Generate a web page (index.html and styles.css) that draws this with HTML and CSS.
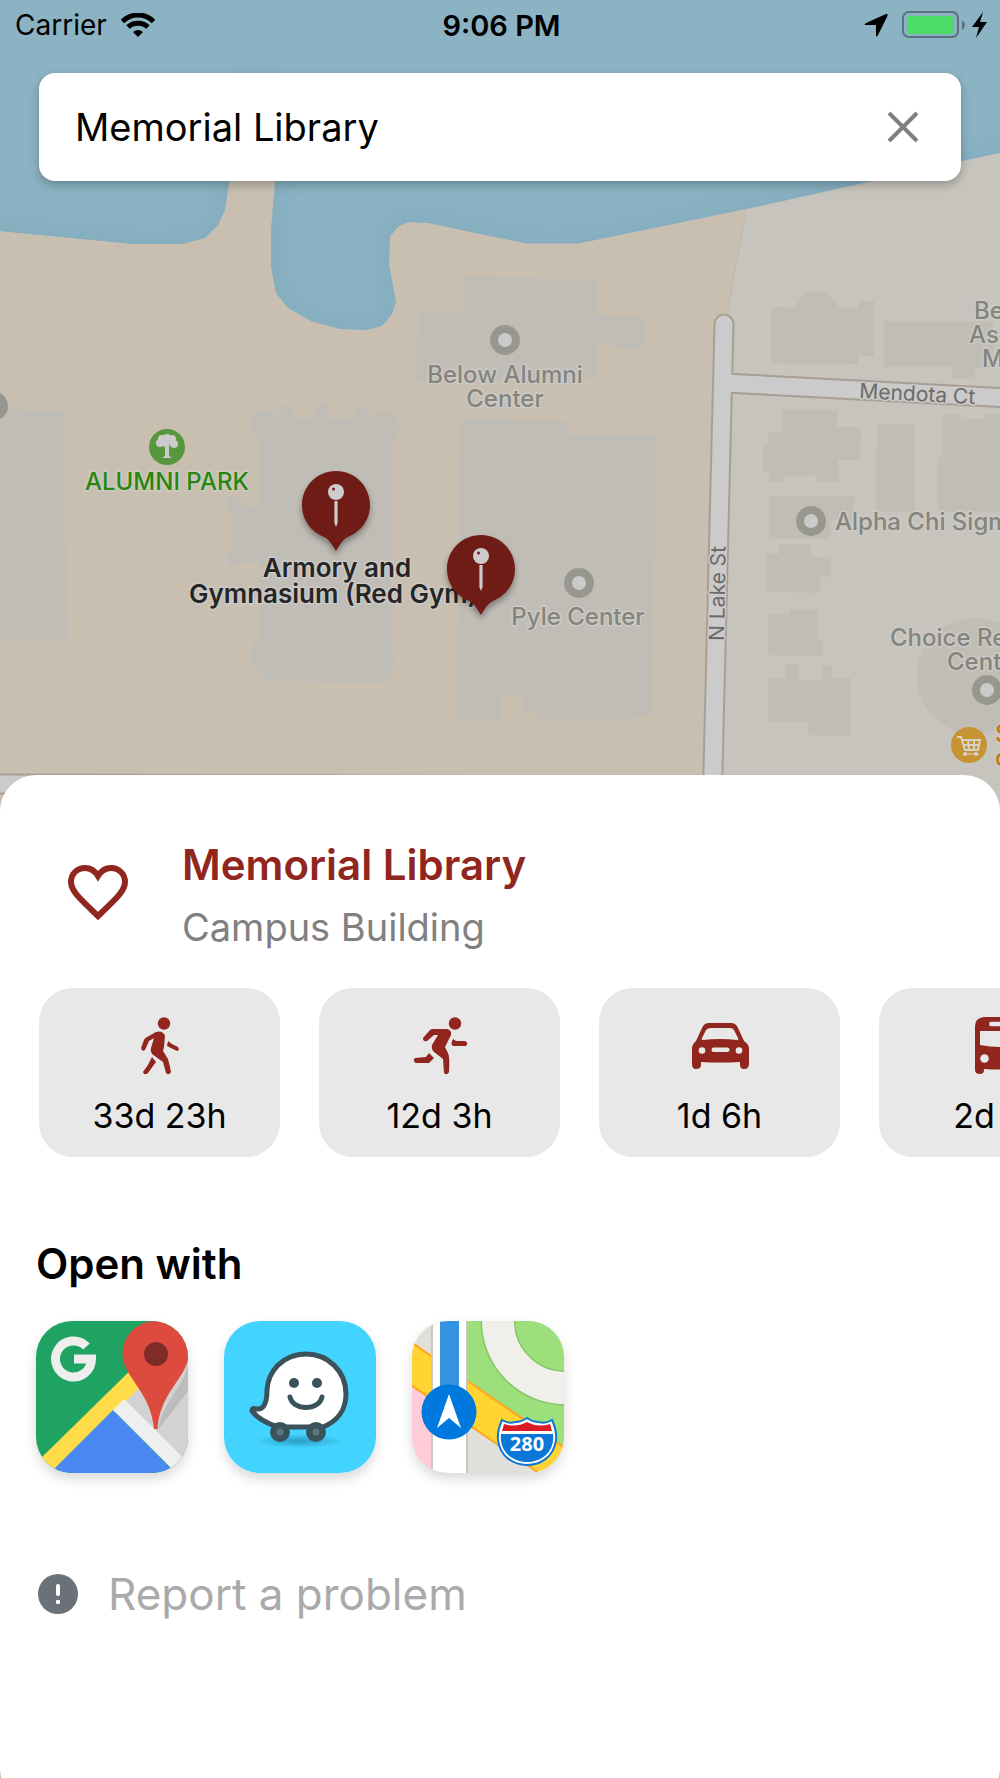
FILE: index.html
```html
<!DOCTYPE html>
<html lang="en">
<head>
    <meta charset="utf-8">
    <meta name="viewport" content="width=device-width, initial-scale=1">
    <title>Memorial Library</title>
    <link rel="stylesheet" href="styles.css">
</head>
<body>
<div class="screen">
    <!-- map -->
    <svg class="map" viewBox="0 0 1000 850" preserveAspectRatio="xMinYMin slice" role="img" aria-label="Campus map">
        <defs>
            <path id="lake" d="M-40-40H1040V144L746 209 578 243.500H527L500 238 428 223 409 222 399 226 390 236 389 265 396 302 392 314 382 326 366 330 340 329 311 321 288 308 276 293 271 267V230L275 182 278 100H236L229 182 225 210 218 225 205 238 182 244H133L0 231-40 228Z"/>
            <clipPath id="lake-clip"><use href="#lake"/></clipPath>
            <filter id="soft"><feGaussianBlur stdDeviation="9"/></filter>
            <filter id="pin-shadow" x="-50%" y="-50%" width="200%" height="200%">
                <feDropShadow dx="0" dy="4" stdDeviation="3" flood-color="#000" flood-opacity=".35"/>
            </filter>
            <g id="poi">
                <circle r="15" fill="#98978f"/>
                <circle r="7" fill="#cacaca"/>
            </g>
            <g id="pin">
                <path filter="url(#pin-shadow)" fill="#6f1d17" d="M0-34C19-34 34-19 34 0C34 16 24 27 12 32C7 34 4 40 0 46C-4 40-7 34-12 32C-24 27-34 16-34 0C-34-19-19-34 0-34Z"/>
                <circle cy="-13" r="8" fill="#cdcccb"/>
                <circle cx="-2.500" cy="-16" r="1.500" fill="#6f1d17"/>
                <path fill="#cdcccb" d="M-1.600-4H1.600V18L0 22-1.600 18Z"/>
            </g>
        </defs>

        <rect width="1000" height="850" fill="#c8bfb1"/>
        <path fill="#c7c4bd" stroke="#bdb6ab" d="M746 209 1001 150V851H712L727 315Z"/>
        <use href="#lake" fill="#8bb3c4"/>
        <g clip-path="url(#lake-clip)">
            <use href="#lake" fill="none" stroke="#81aabb" stroke-width="18" opacity=".7" filter="url(#soft)"/>
        </g>

        <!-- buildings -->
        <g fill="#c0bdb6">
            <path d="M0 409 64 412 65 500 67 642 0 639Z"/>
            <path d="M465 276 597 280V316L645 317V349L611 347V343H597V378L417 381 418 311 464 312Z"/>
            <path d="M461 419 568 421V434L657 436 651 716H634V720L538 718V712H523V696L502 694V721L456 720Z"/>
            <path d="M260 418H281V405H293V418H315V403H328V418H355V407H368V418H391V636L394 660Q394 678 383 683L272 681Q262 679 256 668Q250 664 250 655Q250 643 260 637V563H233V506H260Z"/>
            <circle cx="266" cy="425" r="15"/>
            <circle cx="384" cy="427" r="15"/>
            <circle cx="234" cy="504" r="8"/>
            <circle cx="234" cy="558" r="8"/>
        </g>
        <g fill="#c0bdb5">
            <path d="M771 307 858 308V301H874V356H858V364L771 363Z"/>
            <circle cx="817" cy="313" r="22"/>
            <path d="M884 321 993 322V368H975V379H952V367H884Z"/>
            <path d="M783 410H837V427H861L860 460H838V482H817V475L783 476V482H769V471H763V444H768V432H783Z"/>
            <path d="M877 424H907L915 425V512H876Z"/>
            <path d="M942 414H961V419H985V414H1000V512H938V457H942Z"/>
            <path d="M769 496H854V520H830V539H769Z"/>
            <path d="M779 544H811V557H831L830 577H820V593L766 592 767 554H779Z"/>
            <path d="M789 609H818V639H823V656L768 655V615H789Z"/>
            <path d="M785 664H798V680H822V665H832V678H851V736L808 735V722H768V678H785Z"/>
            <circle cx="975" cy="676" r="58"/>
        </g>

        <!-- roads -->
        <g fill="none" stroke="#a89e94" stroke-width="21">
            <path stroke-linecap="round" d="M724 324 711 850"/>
            <path d="M724 383 1010 398"/>
            <path d="M0 784 700 786"/>
        </g>
        <g fill="none" stroke="#cbcbcb" stroke-width="17">
            <path stroke-linecap="round" d="M724 324 711 850"/>
            <path d="M724 383 1010 398"/>
            <path d="M0 784 700 786"/>
        </g>

        <!-- places -->
        <use href="#poi" x="-7" y="406"/>
        <use href="#poi" x="505" y="340"/>
        <use href="#poi" x="579" y="583"/>
        <use href="#poi" x="811" y="521"/>
        <use href="#poi" x="987" y="690"/>
        <g class="label">
            <text x="505" y="383" text-anchor="middle">Below Alumni</text>
            <text x="505" y="407" text-anchor="middle">Center</text>
            <text x="578" y="625" text-anchor="middle">Pyle Center</text>
            <text x="835" y="530">Alpha Chi Sigma</text>
            <text x="974" y="319">Be</text>
            <text x="969" y="343">Ass</text>
            <text x="982" y="367">M</text>
            <text x="890" y="646">Choice Re</text>
            <text x="947" y="670">Cent</text>
        </g>
        <g class="label label-street">
            <text transform="translate(859 398) rotate(3)">Mendota Ct</text>
            <text transform="translate(724 641) rotate(-89)">N Lake St</text>
        </g>
        <circle cx="167" cy="447" r="18" fill="#57983f"/>
        <g fill="#cbcbcb">
            <circle cx="160" cy="443" r="4"/><circle cx="162" cy="439" r="4"/><circle cx="167" cy="438" r="4"/>
            <circle cx="172" cy="439" r="4"/><circle cx="174" cy="444" r="4"/><circle cx="166" cy="443" r="4"/>
            <path d="M165 444H169V456L172 458H162L165 456Z"/>
        </g>
        <text class="label label-park" x="167" y="490" text-anchor="middle">ALUMNI PARK</text>
        <circle cx="969" cy="745" r="18" fill="#c79433"/>
        <g fill="none" stroke="#d8d3c8" stroke-width="2">
            <path d="M957 737H961L965 750H978L980 740H962M964 745H979M968 740 969 750M974 740V750"/>
            <path d="M965 754H979" stroke-width="1"/>
        </g>
        <circle cx="965" cy="754" r="2" fill="#d8d3c8"/>
        <circle cx="976" cy="754" r="2" fill="#d8d3c8"/>
        <g class="label label-shop">
            <text x="995" y="742">S</text>
            <text x="995" y="766">c</text>
        </g>
        <g class="label label-main">
            <text x="337" y="577" text-anchor="middle">Armory and</text>
            <text x="189" y="603">Gymnasium (Red Gym)</text>
        </g>
        <use href="#pin" x="336" y="505"/>
        <use href="#pin" x="481" y="569"/>
    </svg>

    <header class="top">
        <div class="status">
            <div class="status-left">
                <span>Carrier</span>
                <svg width="34" height="24" viewBox="0 0 34 24" fill="none" stroke="#000" aria-hidden="true">
                    <path d="M1.500 8.500A22 22 0 0 1 32.500 8.500" stroke-width="5"/>
                    <path d="M7 14A15 15 0 0 1 27 14" stroke-width="5"/>
                    <path d="M12 19Q17 15 22 19L17 24Z" fill="#000" stroke="none"/>
                </svg>
            </div>
            <span class="clock">9:06 PM</span>
            <div class="status-right">
                <svg width="24" height="24" viewBox="0 0 24 24" aria-hidden="true"><path d="M22 1Q24 0 23.500 3L14 22Q12 25 12 22V12H2Q-1 12 2 10Z"/></svg>
                <svg width="86" height="28" viewBox="0 0 86 28" aria-hidden="true">
                    <rect x="1" y="1" width="55" height="25" rx="6" fill="none" stroke="#56737f" stroke-width="2"/>
                    <rect x="5" y="5" width="47" height="18" rx="3" fill="#4cdb64"/>
                    <path d="M60 9Q66 14 60 19Z" fill="#56737f"/>
                    <path d="M81 1 70 16H77L74 27 85 11H78Z"/>
                </svg>
            </div>
        </div>
        <form class="search" role="search">
            <input type="text" class="search-input" aria-label="Search" value="Memorial Library">
            <button type="button" class="search-clear" aria-label="Clear">
                <svg width="32" height="32" viewBox="0 0 32 32" stroke="#808080" stroke-width="4"><path d="M2 2 30 30M30 2 2 30"/></svg>
            </button>
        </form>
    </header>

    <main class="sheet">
        <div class="place">
            <button type="button" class="favorite" aria-label="Add to favorites">
                <svg width="60" height="64" viewBox="0 0 60 64" fill="none" stroke="#90261d" stroke-width="6"><path d="M30 52C12 35 3 27 3 18C3 10 9 4 17 4C22 4 27 7 30 12C33 7 38 4 43 4C51 4 57 10 57 18C57 27 48 35 30 52Z"/></svg>
            </button>
            <div>
                <h1>Memorial Library</h1>
                <p>Campus Building</p>
            </div>
        </div>

        <div class="modes">
            <button type="button" class="mode">
                <svg viewBox="0 0 60 60" aria-hidden="true">
                    <circle cx="34" cy="7.500" r="6.200"/>
                    <path d="M17 21 26 16Q33 14 35 20L34 31 33 35 38 43Q40 50 41 56Q39 60 36 57L33 46 22 38Q20 35 21 32L24 22 19 25 15 34Q12 36 11 32L14 24Q15 22 17 21Z"/>
                    <path d="M38 25 42 28 48 31Q50 34 47 35L37 30ZM22 41 26 46 18 57Q14 60 13 56Q18 50 22 41Z"/>
                </svg>
                <span>33d 23h</span>
            </button>
            <button type="button" class="mode">
                <svg viewBox="0 0 60 60" aria-hidden="true">
                    <circle cx="45" cy="7.500" r="6.200"/>
                    <path d="M22 13H37Q42 14 41 19L35 31 38 37Q40 40 39 56Q37 60 34 57L33 43 24 36Q21 33 22 29L28 19H24L17 25Q13 26 13 22L20 14Z"/>
                    <path d="M43 23 46 25H55Q59 27 56 30H43Q40 28 43 23ZM19 37 24 42 19 47H6Q2 45 5 42L16 41Z"/>
                </svg>
                <span>12d 3h</span>
            </button>
            <button type="button" class="mode">
                <svg viewBox="0 0 60 60" aria-hidden="true">
                    <path d="M19 7H41Q46 7 48 12L54 25Q59 28 59 33V48Q59 53 54 53Q50 53 50 49V46Q30 47 11 46V49Q11 53 6 53Q2 53 2 48V33Q2 28 6 25L12 12Q14 7 19 7Z"/>
                    <path class="cut" d="M21 12H40Q43 12 44 14L48 22Q49 25 47 24Q30 22 13 24Q11 24 12 22L16 14Q18 12 21 12Z"/>
                    <circle class="cut" cx="12" cy="34.500" r="3.300"/><circle class="cut" cx="49" cy="34.500" r="3.300"/>
                    <rect class="cut" x="21.500" y="31.500" width="18" height="4.500" rx="2.200"/>
                </svg>
                <span>1d 6h</span>
            </button>
            <button type="button" class="mode">
                <svg viewBox="0 0 60 60" aria-hidden="true">
                    <path d="M14 1H46Q55 2 55 10V54Q55 58 50 58Q46 58 46 54V53Q30 54 14 53V54Q14 58 10 58Q5 58 5 54V10Q5 2 14 1Z"/>
                    <rect class="cut" x="19" y="5.700" width="22" height="4.500" rx="2.200"/>
                    <path class="cut" d="M10 15H50V29Q30 33 10 29Z"/>
                    <circle class="cut" cx="14.500" cy="42.500" r="4.300"/><circle class="cut" cx="45.500" cy="42.500" r="4.300"/>
                </svg>
                <span>2d 8h</span>
            </button>
        </div>

        <h2>Open with</h2>
        <div class="apps">
            <a href="#" class="app" aria-label="Google Maps">
                <svg viewBox="0 0 152 152">
                    <rect width="152" height="152" fill="#1fa362"/>
                    <path fill="#d2d2d2" d="M87 79 152 14V142Z"/>
                    <path fill="#ffdc48" d="M0 142 110 34V60L12 158Z"/>
                    <path fill="#4a89f3" d="M77 89 10 156H143Z"/>
                    <path fill="#efefef" d="M88 78 77 89 140 152H163Z"/>
                    <path fill="#000" opacity=".1" d="M122 109C126 80 152 62 152 40V70Z"/>
                    <path fill="#dc4b3e" d="M119.500 0C138 0 152.500 15 152.500 33C152.500 56 124 70 121.500 108H118C115 70 86.500 56 86.500 33C86.500 15 101 0 119.500 0Z"/>
                    <circle cx="120" cy="33" r="12" fill="#7f2c28"/>
                    <path fill="none" stroke="#eee" stroke-width="9" d="M50.500 25.500A18 18 0 1 0 55.500 38H38"/>
                </svg>
            </a>
            <a href="#" class="app" aria-label="Waze">
                <svg viewBox="0 0 152 152">
                    <defs><radialGradient id="ground"><stop offset="0" stop-color="#2c9cc4"/><stop offset="1" stop-color="#42d4ff"/></radialGradient></defs>
                    <rect width="152" height="152" fill="#42d4ff"/>
                    <ellipse cx="75" cy="120" rx="45" ry="7" fill="url(#ground)"/>
                    <path fill="#fff" stroke="#3a535a" stroke-width="5" stroke-linejoin="round" d="M82 33C58 33 44 51 43 69C43 80 41 87 35 88C31 88 28 86 28 90C34 98 44 103 55 106H99C114 100 122 88 122 73C122 50 104 33 82 33Z"/>
                    <g fill="#3a535a">
                        <circle cx="70" cy="62" r="5"/><circle cx="93" cy="62" r="5"/>
                        <circle cx="56" cy="111" r="10"/><circle cx="92" cy="111" r="10"/>
                    </g>
                    <circle cx="56" cy="111" r="3.500" fill="#5d757c"/><circle cx="92" cy="111" r="3.500" fill="#5d757c"/>
                    <path fill="none" stroke="#3a535a" stroke-width="5" stroke-linecap="round" d="M66 76C69 90 95 90 98 76"/>
                </svg>
            </a>
            <a href="#" class="app" aria-label="Apple Maps">
                <svg viewBox="0 0 152 152">
                    <rect width="152" height="152" fill="#e0dfda"/>
                    <path fill="#ffcbd8" d="M0 65 20 78V152H0Z"/>
                    <path fill="#9cdf7b" d="M54 0H152V126L54 58Z"/>
                    <circle cx="153" cy="0" r="67" fill="none" stroke="#87c46a" stroke-width="35"/>
                    <circle cx="153" cy="0" r="67" fill="none" stroke="#f1efea" stroke-width="32"/>
                    <path fill="#ffd433" stroke="#ffa41b" stroke-width="2" d="M-4 19 156 129V172L-4 62Z"/>
                    <path fill="#c8c7c0" d="M19 0H56V152H19Z"/>
                    <path fill="#fff" d="M21 0H54V152H21Z"/>
                    <path fill="#3493e1" d="M28 0H47V80H28Z"/>
                    <circle cx="37" cy="91" r="27.500" fill="#0079de"/>
                    <path fill="#fff" d="M37 73 49 107 37 97 25 107Z"/>
                    <path fill="#fff" stroke="#0a77d6" stroke-width="2" d="M90 99Q97 103 103 101Q109 101 115 97Q121 101 127 101Q133 103 140 99Q145 110 144 119C142 136 128 144 115 144C102 144 88 136 86 119Q85 110 90 99Z"/>
                    <path fill="#dc1c24" d="M92 103Q104 107 115 101Q126 107 138 103L140 110H90Z"/>
                    <path fill="#0a77d6" d="M89 113H141C143 130 130 141 115 141C100 141 87 130 89 113Z"/>
                    <text class="shield" x="115" y="130" text-anchor="middle">280</text>
                </svg>
            </a>
        </div>

        <button type="button" class="report">
            <svg width="40" height="40" viewBox="0 0 40 40" aria-hidden="true">
                <circle cx="20" cy="20" r="20" fill="#6b7178"/>
                <rect x="18" y="10" width="4" height="12" rx="2" fill="#fff"/>
                <rect x="18" y="26" width="4" height="4" rx="1" fill="#fff"/>
            </svg>
            <span>Report a problem</span>
        </button>
    </main>
</div>
</body>
</html>
```
FILE: styles.css
```css
* {
    box-sizing: border-box;
}

body {
    margin: 0;
    font-family: Inter, "Liberation Sans", sans-serif;
    color: #000;
}

h1, h2, p {
    margin: 0;
}

button {
    padding: 0;
    border: none;
    background: none;
    font: inherit;
    color: inherit;
    cursor: pointer;
}

svg {
    display: block;
}

.screen {
    position: relative;
    display: flex;
    flex-direction: column;
    height: 100vh;
    min-height: 1700px;
    overflow: hidden;
    background: #c8bfb1;
}

/* map lies under everything else */
.map {
    position: absolute;
    top: 0;
    left: 0;
    width: 100%;
    height: 850px;
}

.label {
    font-size: 24px;
    font-weight: 500;
    fill: #85847d;
    stroke: #cbcac6;
    stroke-width: 3px;
    stroke-linejoin: round;
    paint-order: stroke;
}

.label-street {
    font-size: 21px;
    font-weight: 400;
    fill: #6b6b6b;
}

.label-park {
    fill: #2a860c;
}

.label-shop {
    fill: #b9790c;
}

.label-main {
    font-size: 26px;
    font-weight: 600;
    fill: #252525;
}

/* status bar and search */
.top {
    position: relative;
    height: 775px;
    flex-shrink: 0;
}

.status {
    display: grid;
    grid-template-columns: 1fr auto 1fr;
    align-items: center;
    height: 50px;
    padding: 0 12px 0 15px;
    font-size: 28px;
}

.status-left,
.status-right {
    display: flex;
    align-items: center;
    gap: 14px;
}

.status-right {
    justify-content: flex-end;
}

.clock {
    font-size: 29px;
    font-weight: 600;
}

.search {
    display: flex;
    align-items: center;
    height: 108px;
    margin: 23px 39px 0;
    padding: 0 42px 0 36px;
    border-radius: 16px;
    background: #fff;
    box-shadow: 0 4px 10px rgba(0, 0, 0, 0.25);
}

.search-input {
    flex: 1;
    min-width: 0;
    padding: 0;
    border: none;
    outline: none;
    background: none;
    font: inherit;
    font-size: 38px;
    color: #000;
}

/* bottom sheet */
.sheet {
    position: relative;
    flex: 1 0 auto;
    margin-bottom: -26px;
    padding-top: 58px;
    border-radius: 36px;
    background: #fff;
}

.place {
    display: flex;
    align-items: center;
    gap: 54px;
    padding-left: 68px;
}

.place h1 {
    font-size: 42px;
    line-height: 63px;
    font-weight: 600;
    color: #90261d;
}

.place p {
    font-size: 38px;
    line-height: 63px;
    color: #808080;
}

.modes {
    display: flex;
    gap: 39px;
    margin-top: 29px;
    padding: 0 39px;
    overflow-x: auto;
    scrollbar-width: none;
}

.mode {
    flex: 0 0 241px;
    display: flex;
    flex-direction: column;
    align-items: center;
    gap: 20px;
    padding: 28px 0 21px;
    border-radius: 34px;
    background: #e8e8e8;
    font-size: 34px;
    line-height: 40px;
}

.mode svg {
    width: 60px;
    height: 60px;
    fill: #90261d;
}

.mode .cut {
    fill: #e8e8e8;
}

.sheet h2 {
    margin-top: 79px;
    padding-left: 36px;
    font-size: 42px;
    line-height: 56px;
    font-weight: 600;
}

.apps {
    display: flex;
    gap: 36px;
    margin-top: 29px;
    padding-left: 36px;
}

.app {
    width: 152px;
    height: 152px;
    border-radius: 36px;
    overflow: hidden;
    box-shadow: 0 6px 12px rgba(0, 0, 0, 0.15);
}

.shield {
    font-family: "Open Sans", sans-serif;
    font-size: 20px;
    font-weight: 700;
    fill: #fff;
}

.report {
    display: flex;
    align-items: center;
    gap: 30px;
    margin: 93px 0 0 38px;
    font-size: 44px;
    line-height: 56px;
    color: #aaa;
}
```
